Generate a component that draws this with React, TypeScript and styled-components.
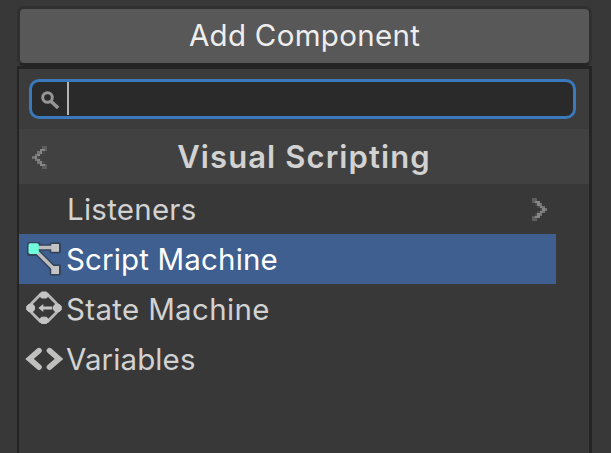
import React from "react";
import styled, { createGlobalStyle } from "styled-components";

const GlobalStyle = createGlobalStyle`
  *, *::before, *::after { box-sizing: border-box; }
  html, body { margin: 0; height: 100%; overflow: hidden; background: #383838; }
  body { font-family: Inter, "Liberation Sans", sans-serif; color: #d2d2d2; }
`;

const Inspector = styled.main`
  width: 611px;
  height: 453px;
  padding: 6px 19px 0 17px;
  overflow: hidden;
  background: #383838;
  display: flex;
  flex-direction: column;
`;

const AddButton = styled.button`
  flex: none;
  height: 60px;
  padding: 0 0 2px;
  border: 3px solid #303030;
  border-bottom-color: #242424;
  border-radius: 7px;
  background: #585858;
  color: #eeeeee;
  font: 400 29.5px/50px Inter, "Liberation Sans", sans-serif;
  letter-spacing: 0.3px;
`;

const Popup = styled.section`
  flex: 1;
  border: solid #242424;
  border-width: 3px 3px 0 2px;
  background: #383838;
`;

const SearchArea = styled.div`
  height: 60px;
  padding: 10px 13px 0 10px;
  background: #3c3c3c;
`;

const SearchField = styled.div`
  height: 40px;
  display: flex;
  align-items: flex-start;
  border: 3px solid #3a79bb;
  border-radius: 10px;
  background: #2a2a2a;
`;

const SearchIcon = styled.svg`
  width: 20px;
  height: 20px;
  margin: 9px 6px 0 9px;
`;

const Caret = styled.span`
  width: 2px;
  height: 33px;
  background: #b4b4b4;
`;

const Header = styled.header`
  height: 55px;
  display: grid;
  grid-template-columns: 41px 1fr 41px;
  align-items: center;
  background: #414141;
`;

const Title = styled.h1`
  margin: 0;
  font-size: 31px;
  font-weight: 600;
  line-height: 55px;
  letter-spacing: 1.1px;
  text-align: center;
  white-space: nowrap;
`;

const List = styled.ul`
  margin: 0;
  padding: 0;
  width: 537px;
  list-style: none;
`;

const Item = styled.li<{ $selected?: boolean }>`
  height: 50px;
  display: grid;
  grid-template-columns: 47px 1fr 30px;
  align-items: center;
  background: ${(p) => (p.$selected ? "#3e5f90" : "transparent")};
  color: ${(p) => (p.$selected ? "#ffffff" : "#d2d2d2")};
`;

const Label = styled.span<{ $spacing?: number; $inset?: number }>`
  padding-left: ${(p) => p.$inset ?? 0}px;
  font-size: 29.5px;
  line-height: 50px;
  letter-spacing: ${(p) => p.$spacing ?? 0.33}px;
  white-space: nowrap;
`;

const ItemIcon = styled.svg`
  width: 40px;
  height: 40px;
  margin-left: 5px;
`;

const ChevronSvg = styled.svg<{ $back?: boolean }>`
  width: 15px;
  height: 23px;
  margin-left: ${(p) => (p.$back ? 13 : 6)}px;
  margin-top: ${(p) => (p.$back ? 2 : 1)}px;
  transform: ${(p) => (p.$back ? "scaleX(-1)" : "none")};
`;

function Chevron({ back }: { back?: boolean }) {
  return (
    <ChevronSvg $back={back} viewBox="0 0 6 9" preserveAspectRatio="none" shapeRendering="crispEdges">
      <path fill="#5e5e5e" d="M0 0h2v1H0zM0 1h1v1H0zM0 7h1v1H0zM0 8h2v1H0z" />
      <path fill="#484848" d="M1 2h1v1H1zM2 3h1v1H2zM3 4h1v1H3zM2 5h1v1H2zM1 6h1v1H1z" />
      <path fill="#868686" d="M1 1h2v1H1zM2 2h1v1H2zM3 3h1v1H3zM4 4h1v1H4zM3 5h1v1H3zM2 6h1v1H2zM1 7h2v1H1z" />
      <path fill="#747474" d="M3 2h1v1H3zM4 3h1v1H4zM5 4h1v1H5zM4 5h1v1H4zM3 6h1v1H3z" />
    </ChevronSvg>
  );
}

function ScriptIcon() {
  return (
    <ItemIcon viewBox="0 0 40 40">
      <g fill="none" stroke="#34445c" strokeLinejoin="round">
        <path d="M10 8.500h20M10 10l21 21" strokeWidth="6.500" />
        <path d="M5 5h9.500v10H5zM27.500 5.200H35v7.300h-7.500zM27.500 27.200H35v7.600h-7.500z" strokeWidth="4" />
      </g>
      <path d="M10 8.500h20M10 10l21 21" stroke="#bcbcbc" strokeWidth="3.500" />
      <path fill="#c4c4c4" d="M27.300 5H35v7.700h-7.700zM27.300 27H35v8h-7.700z" />
      <rect x="4.500" y="4.300" width="10.300" height="10.700" rx="1.800" fill="#70ffdc" />
    </ItemIcon>
  );
}

function StateIcon() {
  return (
    <ItemIcon viewBox="0 0 40 40">
      <path d="M16.500 5.500h7L35 17v4L23.500 32.500h-7L5 21v-4z" fill="none" stroke="#b8b8b8" strokeWidth="2.800" />
      <path fill="#c4c4c4" stroke="#c4c4c4" strokeLinejoin="round" d="M17.500 3h5l1.800 2v2l-1.800 2h-5l-1.800-2V5zM17.500 28.200h5l1.800 2v2l-1.800 2.300h-5l-1.800-2.300v-2zM4.500 15.500h4.500l1.500 1.800v3.400L9 22.500H4.500l-1.800-1.800v-3.400zM31 15.500h4.500l1.800 1.800v3.400l-1.800 1.800H31l-1.500-1.800v-3.400z" />
      <path fill="#c4c4c4" d="M14.300 19l5-4v2.400h9v3.200h-9V23z" />
    </ItemIcon>
  );
}

function VariablesIcon() {
  return (
    <ItemIcon viewBox="0 0 40 40">
      <path d="M15 11.600L5.500 19.900 15 28.200M25.500 11.600L35 19.900 25.500 28.200" fill="none" stroke="#c0c1bf" strokeWidth="5.600" strokeLinecap="round" />
    </ItemIcon>
  );
}

export default function App() {
  return (
    <>
      <GlobalStyle />
      <Inspector>
        <AddButton>Add Component</AddButton>
        <Popup>
          <SearchArea>
            <SearchField>
              <SearchIcon viewBox="0 0 20 20">
                <circle cx="6.500" cy="6.500" r="4.800" fill="none" stroke="#969696" strokeWidth="3" />
                <path d="M10.200 10.500l7 6.500" stroke="#969696" strokeWidth="3.600" />
              </SearchIcon>
              <Caret />
            </SearchField>
          </SearchArea>
          <Header>
            <Chevron back />
            <Title>Visual Scripting</Title>
          </Header>
          <List>
            <Item><span /><Label $inset={1} $spacing={0.25}>Listeners</Label><Chevron /></Item>
            <Item $selected><ScriptIcon /><Label $spacing={0.15}>Script Machine</Label></Item>
            <Item><StateIcon /><Label>State Machine</Label></Item>
            <Item><VariablesIcon /><Label $spacing={0.1}>Variables</Label></Item>
          </List>
        </Popup>
      </Inspector>
    </>
  );
}
